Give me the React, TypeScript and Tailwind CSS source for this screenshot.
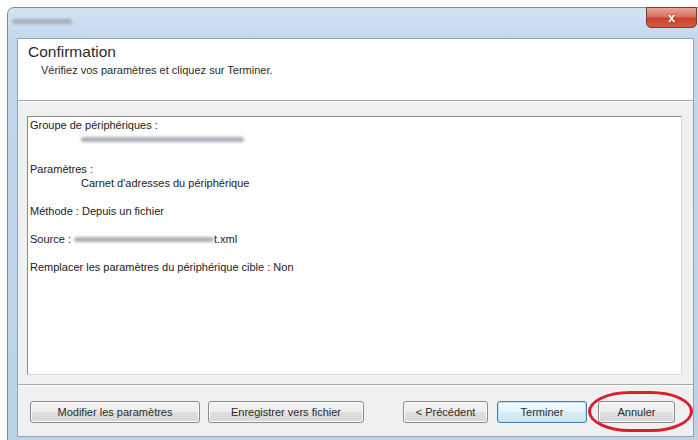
import React from "react";

const FONT = "font-['Liberation_Sans',Arial,sans-serif]";

function WinButton({ label, className, primary }: { label: string; className: string; primary?: boolean }) {
  return (
    <div
      className={`${className} h-[22px] flex items-center justify-center rounded-[3px] border text-[11px] text-[#2a2a2a] ${
        primary
          ? "border-[#3c7fb1] bg-[linear-gradient(#f4fafe_0%,#e6f3fb_50%,#d6ecf8_50%,#cfe6f4_100%)] shadow-[inset_0_0_0_1px_#bfe2f7]"
          : "border-[#8a8a8a] bg-[linear-gradient(#f4f4f4_0%,#ececec_50%,#e0e0e0_50%,#d6d6d6_100%)] shadow-[inset_0_0_0_1px_#fbfbfb]"
      }`}
    >
      {label}
    </div>
  );
}

function Blur({ className }: { className: string }) {
  return <div className={`${className} rounded-full bg-[#a9adb3] blur-[1.5px]`} />;
}

export default function App() {
  return (
    <div className={`${FONT} w-[698px] h-[440px] bg-white pt-[7px] pl-[7px] overflow-hidden`}>
      {/* fenêtre */}
      <div className="w-[700px] h-[440px] rounded-t-[7px] border border-[#7d8d9f] bg-[linear-gradient(180deg,#d3e3f3_0%,#c2d7ec_8%,#bcd2e9_100%)] flex flex-col">
        {/* barre de titre */}
        <div className="h-[30px] flex items-start justify-between pl-[4px] pr-[9px]">
          <Blur className="mt-[11px] w-[60px] h-[5px]" />
          <div className="w-[51px] h-[21px] -mt-[1px] rounded-b-[5px] border border-[#7f3a32] bg-[linear-gradient(180deg,#e9a596_0%,#d8705e_45%,#c7432f_55%,#d45a3f_100%)] flex items-center justify-center">
            <span className="text-[13px] leading-none font-bold text-white [text-shadow:0_0_2px_#7a2a20]">x</span>
          </div>
        </div>

        {/* zone client */}
        <div className="ml-[9px] w-[677px] h-[399px] border border-[#8fa3b9] bg-[#f0f0f0] flex flex-col">
          {/* en-tête */}
          <div className="h-[62px] bg-white border-b border-[#a5a5a5] pt-[4px]">
            <div className="pl-[10px] text-[15.5px] leading-[18px] text-[#2b2b2b]">Confirmation</div>
            <div className="pl-[23px] mt-[2px] text-[11px] leading-[14px] text-[#2b2b2b]">
              Vérifiez vos paramètres et cliquez sur Terminer.
            </div>
          </div>

          {/* corps */}
          <div className="border-t border-white pt-[14px] pl-[9px] pr-[11px] pb-[9px]">
            <div className="h-[259px] bg-white border border-[#8b8b8b] border-r-[#dcdcdc] border-b-[#dcdcdc] pt-[1px] pl-[2px] text-[11px] leading-[14px] text-[#222]">
              <div>Groupe de périphériques :</div>
              <div className="h-[14px] flex items-center pl-[51px]">
                <Blur className="w-[163px] h-[5px]" />
              </div>
              <div className="mt-[16px]">Paramètres :</div>
              <div className="pl-[51px]">Carnet d'adresses du périphérique</div>
              <div className="mt-[14px]">Méthode : Depuis un fichier</div>
              <div className="mt-[14px] flex items-center">
                <span>Source :</span>
                <Blur className="ml-[3px] w-[140px] h-[5px]" />
                <span>t.xml</span>
              </div>
              <div className="mt-[14px]">Remplacer les paramètres du périphérique cible : Non</div>
            </div>
          </div>

          {/* séparateur */}
          <div className="h-[2px] border-t border-[#a8a8a8] bg-white" />

          {/* boutons */}
          <div className="flex items-center pt-[15px] pl-[12px]">
            <WinButton label="Modifier les paramètres" className="w-[170px]" />
            <WinButton label="Enregistrer vers fichier" className="ml-[8px] w-[156px]" />
            <WinButton label="< Précédent" className="ml-[39px] w-[85px]" />
            <WinButton label="Terminer" className="ml-[9px] w-[90px]" primary />
            <div className="relative ml-[11px]">
              <WinButton label="Annuler" className="w-[77px]" />
              <div className="absolute -left-[10px] -top-[10px] w-[105px] h-[41px] rounded-[40%/50%] border-[3px] border-[#d8202c]" />
            </div>
          </div>
        </div>
      </div>
    </div>
  );
}
